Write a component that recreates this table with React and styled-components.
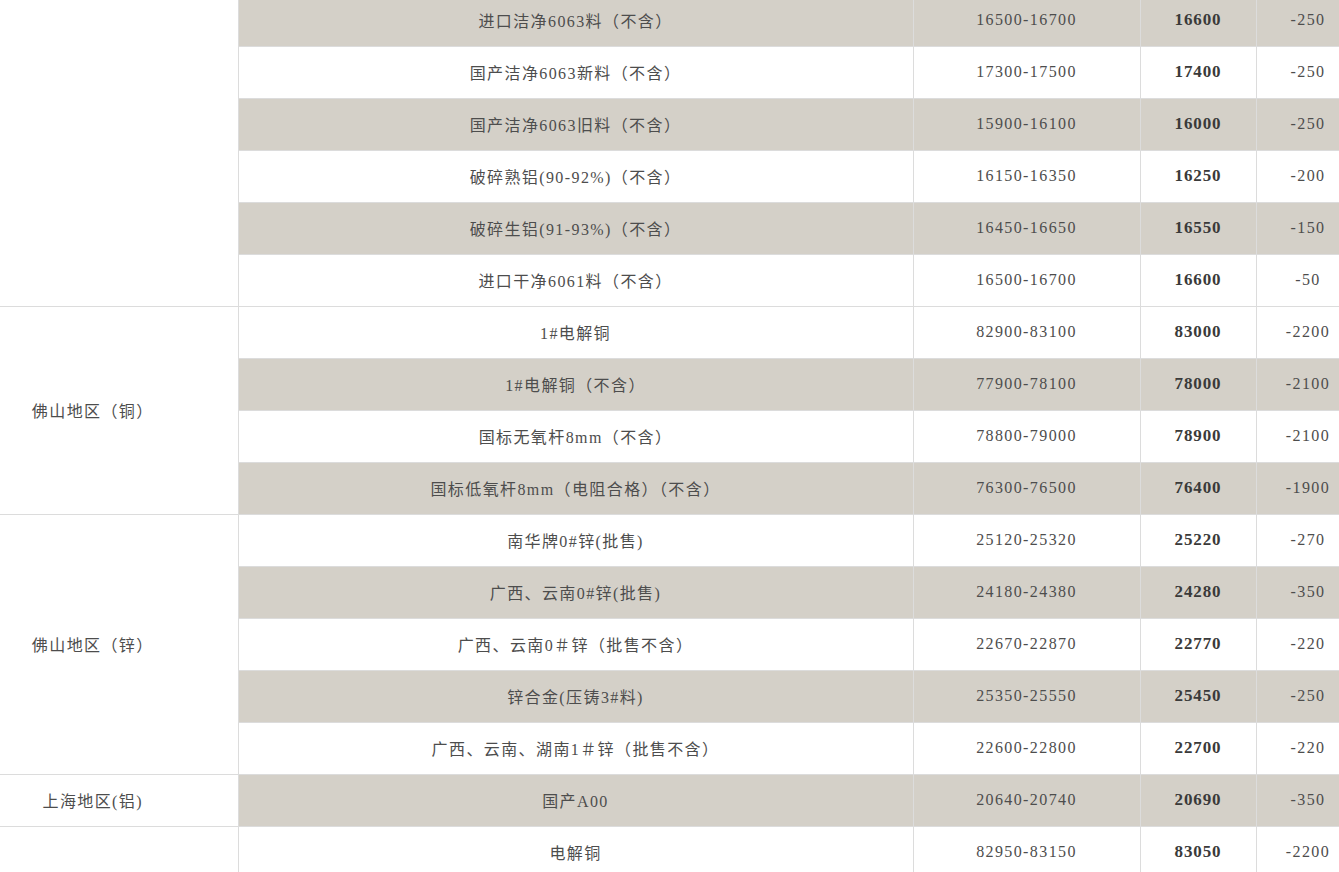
import React from "react";
import styled, { createGlobalStyle } from "styled-components";

// shade: 1 = grey row, 0 = white row
const groups = [
  {
    region: "",
    rows: [
      ["进口洁净6063料（不含）", "16500-16700", "16600", "-250", 1],
      ["国产洁净6063新料（不含）", "17300-17500", "17400", "-250", 0],
      ["国产洁净6063旧料（不含）", "15900-16100", "16000", "-250", 1],
      ["破碎熟铝(90-92%)（不含）", "16150-16350", "16250", "-200", 0],
      ["破碎生铝(91-93%)（不含）", "16450-16650", "16550", "-150", 1],
      ["进口干净6061料（不含）", "16500-16700", "16600", "-50", 0],
    ],
  },
  {
    region: "佛山地区（铜）",
    rows: [
      ["1#电解铜", "82900-83100", "83000", "-2200", 0],
      ["1#电解铜（不含）", "77900-78100", "78000", "-2100", 1],
      ["国标无氧杆8mm（不含）", "78800-79000", "78900", "-2100", 0],
      ["国标低氧杆8mm（电阻合格）（不含）", "76300-76500", "76400", "-1900", 1],
    ],
  },
  {
    region: "佛山地区（锌）",
    rows: [
      ["南华牌0#锌(批售)", "25120-25320", "25220", "-270", 0],
      ["广西、云南0#锌(批售)", "24180-24380", "24280", "-350", 1],
      ["广西、云南0＃锌（批售不含）", "22670-22870", "22770", "-220", 0],
      ["锌合金(压铸3#料)", "25350-25550", "25450", "-250", 1],
      ["广西、云南、湖南1＃锌（批售不含）", "22600-22800", "22700", "-220", 0],
    ],
  },
  {
    region: "上海地区(铝)",
    rows: [["国产A00", "20640-20740", "20690", "-350", 1]],
  },
  {
    region: "",
    rows: [["电解铜", "82950-83150", "83050", "-2200", 0]],
  },
];

const widths = [238, 675, 227, 116, 104];

const GlobalStyle = createGlobalStyle`
  html, body {
    margin: 0;
    padding: 0;
    overflow: hidden;
    background: #fff;
  }
`;

const Table = styled.table`
  width: 1360px;
  margin-top: -6px;
  border-collapse: collapse;
  table-layout: fixed;
  font-family: "Liberation Serif", "Noto Sans CJK SC", serif;
  font-size: 16px;
  letter-spacing: 1.4px;
  color: #4d4d4d;
`;

const Col = styled.col`
  width: ${(p) => p.$w}px;
`;

const Row = styled.tr`
  height: 52px;
  background: ${(p) => (p.$shaded ? "#d4d0c8" : "#fff")};
`;

const Cell = styled.td`
  border: 1px solid #dcdcdc;
  text-align: center;
  vertical-align: middle;
  padding: 0 0 2px;
  white-space: nowrap;
`;

const RegionCell = styled(Cell)`
  background: #fff;
  border-left: none;
  padding-right: 52px;
`;

const PriceCell = styled(Cell)`
  font-size: 17px;
  font-weight: bold;
  color: #3a3a3a;
  letter-spacing: 0.9px;
`;

export default function App() {
  return (
    <>
      <GlobalStyle />
      <Table>
        <colgroup>
          {widths.map((w, i) => (
            <Col key={i} $w={w} />
          ))}
        </colgroup>
        <tbody>
          {groups.map((g, gi) =>
            g.rows.map((r, ri) => (
              <Row key={`${gi}-${ri}`} $shaded={r[4] === 1}>
                {ri === 0 && <RegionCell rowSpan={g.rows.length}>{g.region}</RegionCell>}
                <Cell>{r[0]}</Cell>
                <Cell>{r[1]}</Cell>
                <PriceCell>{r[2]}</PriceCell>
                <Cell>{r[3]}</Cell>
              </Row>
            ))
          )}
        </tbody>
      </Table>
    </>
  );
}
